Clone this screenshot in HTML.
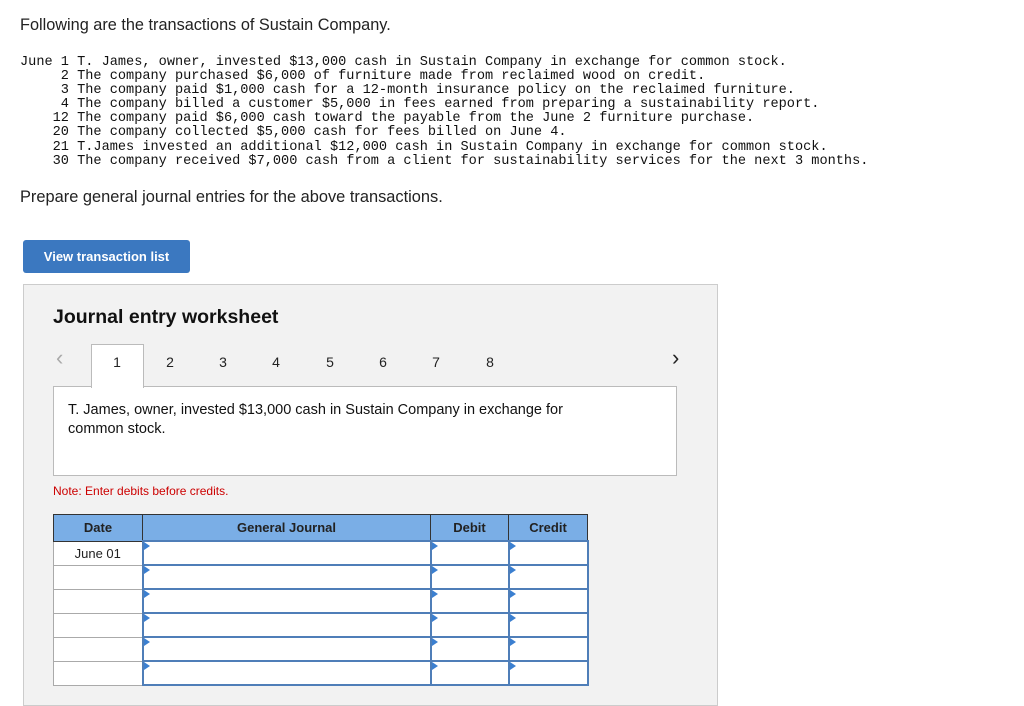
<!DOCTYPE html>
<html><head><style>
body{margin:0;width:1024px;height:689px;overflow:hidden;background:#fff;font-family:"Liberation Sans",Arial,sans-serif;color:#222;position:relative}
.a{position:absolute}
pre{position:absolute;left:20px;top:56px;margin:0;font-family:"Liberation Mono",monospace;font-size:13.6px;line-height:14.1px;color:#111}
.btn{left:23px;top:240px;width:167px;height:33px;background:#3b78c0;border-radius:3px;color:#fff;font-weight:bold;font-size:13px;line-height:33px;text-align:center}
.ws{left:23px;top:284px;width:693px;height:420px;background:#f2f2f2;border:1px solid #ccc}
.t{font-size:14px;top:354px;width:20px;text-align:center}
table{border-collapse:collapse;position:absolute;left:53px;top:514px;font-size:13px}
th{background:#7aaee6;border:1px solid #333;height:25px;font-weight:bold;color:#222;padding:0}
td{border:1px solid #aaa;height:22px;background:#fff;padding:0}
td.i{border:2px solid #4f7eb8;position:relative}
td.i:before{content:"";position:absolute;left:0;top:0;border-left:6px solid #3b7fd0;border-top:4px solid transparent;border-bottom:4px solid transparent}
</style></head><body>
<div class="a" style="left:20px;top:16px;font-size:16.3px">Following are the transactions of Sustain Company.</div>
<pre>June 1 T. James, owner, invested $13,000 cash in Sustain Company in exchange for common stock.
     2 The company purchased $6,000 of furniture made from reclaimed wood on credit.
     3 The company paid $1,000 cash for a 12-month insurance policy on the reclaimed furniture.
     4 The company billed a customer $5,000 in fees earned from preparing a sustainability report.
    12 The company paid $6,000 cash toward the payable from the June 2 furniture purchase.
    20 The company collected $5,000 cash for fees billed on June 4.
    21 T.James invested an additional $12,000 cash in Sustain Company in exchange for common stock.
    30 The company received $7,000 cash from a client for sustainability services for the next 3 months.</pre>
<div class="a" style="left:20px;top:188px;font-size:16.4px">Prepare general journal entries for the above transactions.</div>
<div class="a btn">View transaction list</div>
<div class="a ws"></div>
<div class="a" style="left:53px;top:306px;font-size:19.5px;font-weight:bold;color:#111">Journal entry worksheet</div>
<div class="a" style="left:56px;top:345px;font-size:22px;color:#aaa">&lsaquo;</div>
<div class="a" style="left:672px;top:345px;font-size:22px;color:#222">&rsaquo;</div>
<div class="a" style="left:53px;top:386px;width:622px;height:88px;background:#fff;border:1px solid #bbb"></div>
<div class="a" style="left:91px;top:344px;width:51px;height:43px;background:#fff;border:1px solid #bbb;border-bottom:none"></div>
<div class="a t" style="left:107px">1</div><div class="a t" style="left:160px">2</div><div class="a t" style="left:213px">3</div><div class="a t" style="left:266px">4</div><div class="a t" style="left:320px">5</div><div class="a t" style="left:373px">6</div><div class="a t" style="left:426px">7</div><div class="a t" style="left:480px">8</div>
<div class="a" style="left:68px;top:401px;font-size:14.5px;line-height:19px;width:540px;color:#111">T. James, owner, invested $13,000 cash in Sustain Company in exchange for<br>common stock.</div>
<div class="a" style="left:53px;top:484px;font-size:12px;color:#c00">Note: Enter debits before credits.</div>
<table>
<tr><th style="width:88px">Date</th><th style="width:287px">General Journal</th><th style="width:77px">Debit</th><th style="width:78px">Credit</th></tr>
<tr><td style="text-align:center">June 01</td><td class="i"></td><td class="i"></td><td class="i"></td></tr>
<tr><td></td><td class="i"></td><td class="i"></td><td class="i"></td></tr>
<tr><td></td><td class="i"></td><td class="i"></td><td class="i"></td></tr>
<tr><td></td><td class="i"></td><td class="i"></td><td class="i"></td></tr>
<tr><td></td><td class="i"></td><td class="i"></td><td class="i"></td></tr>
<tr><td></td><td class="i"></td><td class="i"></td><td class="i"></td></tr>
</table>
</body></html>
